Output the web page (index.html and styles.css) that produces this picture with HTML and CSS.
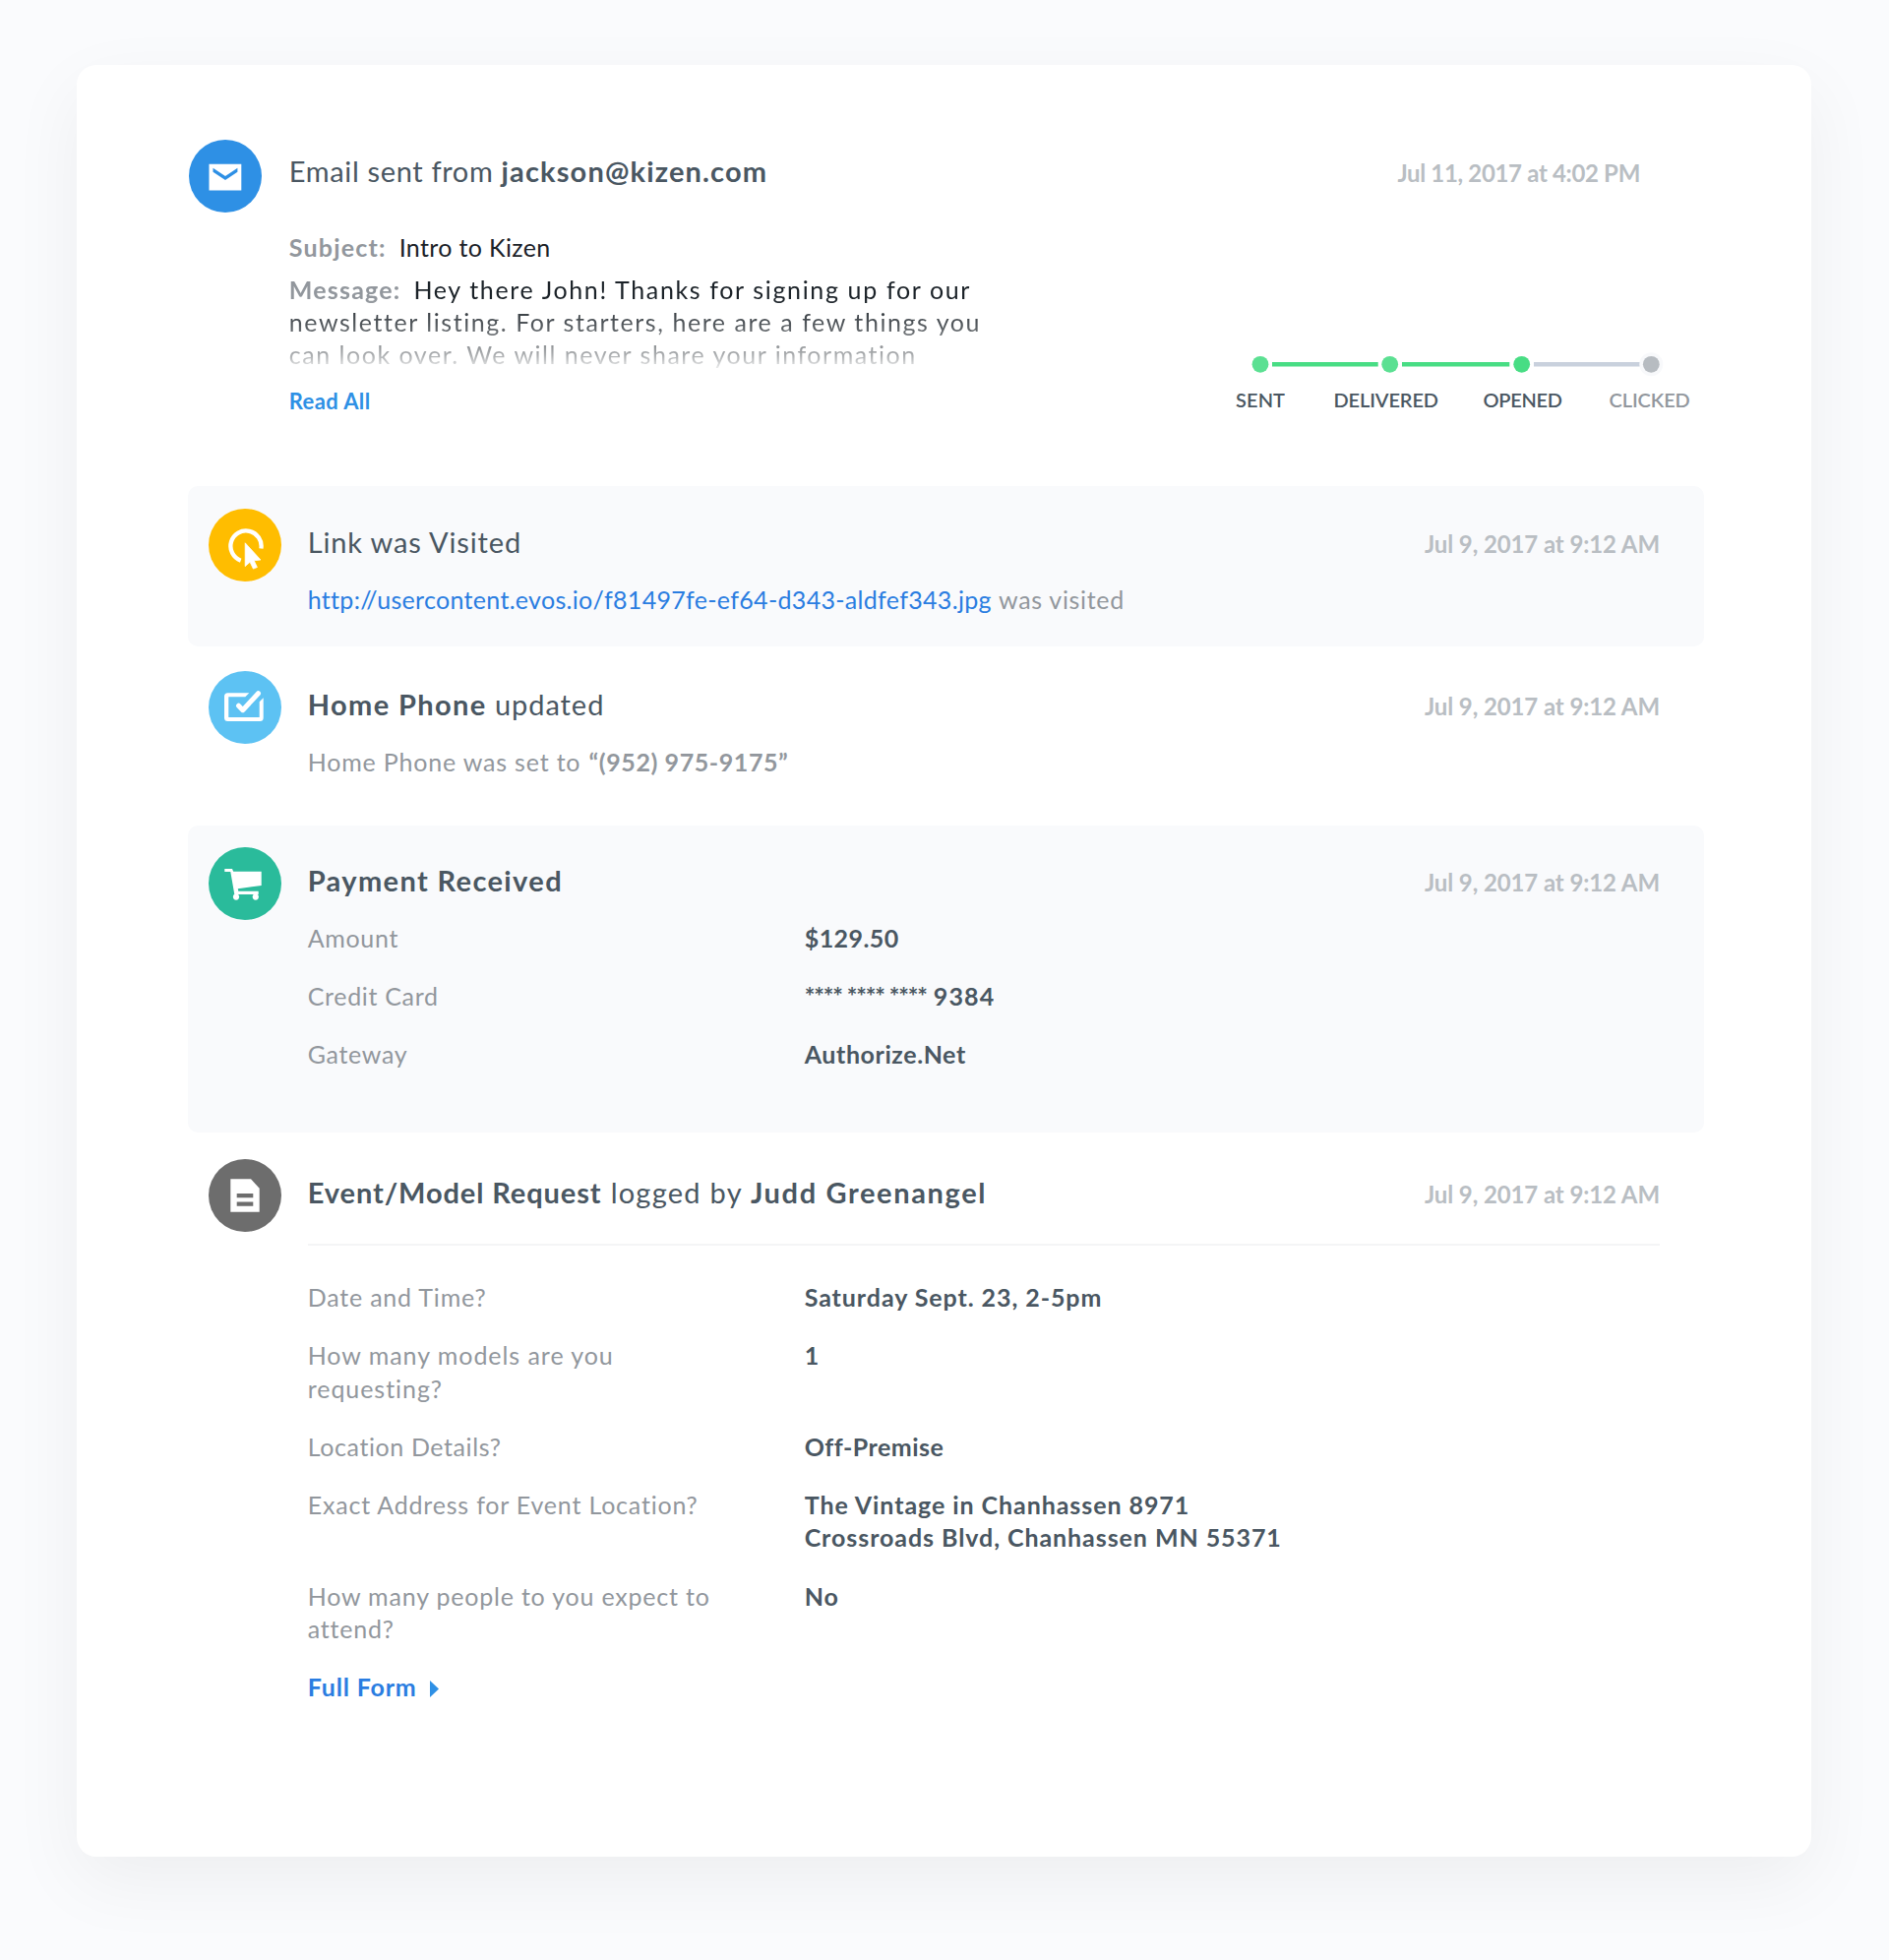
FILE: index.html
```html
<!DOCTYPE html>
<html lang="en">
<head>
<meta charset="utf-8">
<title>Activity timeline</title>
<link rel="stylesheet" href="styles.css">
</head>
<body>
<main class="card">

  <article class="item item-email">
    <svg class="icon" viewBox="0 0 74 74"><circle cx="37" cy="37" r="37" fill="#2e90e5"/><path fill="#fff" d="M20.5 24.7h32.8v26.8H20.5z"/><path fill="#2e90e5" d="M24.5 28.8 37 37l12.4-8.2v3.9L37 41l-12.5-8.3z"/></svg>
    <div class="body">
      <header class="head">
        <h2 class="title"><span class="t-email">Email sent from</span> <b class="t-address">jackson@kizen.com</b></h2>
        <time class="date date-email">Jul 11, 2017 at 4:02 PM</time>
      </header>
      <div class="email-row">
        <div class="email-text">
          <p class="subject"><b class="tag">Subject:</b><span class="dark">Intro to Kizen</span></p>
          <p class="message"><b class="tag">Message:</b><span class="m-first">Hey there John! Thanks for signing up for our</span><br>newsletter listing. For starters, here are a few things you<br><span class="m-last">can look over. We will never share your information</span></p>
          <a class="read-all">Read All</a>
        </div>
        <div class="progress">
          <svg class="track" viewBox="0 0 462 26">
            <path d="M37 13.3h107.7M169 13.3h109.3" stroke="#48dd84" stroke-width="4.4"/>
            <path d="M303 13.3h108" stroke="#c9d1dd" stroke-width="4.4"/>
            <circle cx="25" cy="13.3" r="8.4" fill="#5be092"/>
            <circle cx="156.7" cy="13.3" r="8.4" fill="#5be092"/>
            <circle cx="290.7" cy="13.3" r="8.4" fill="#48dd84"/>
            <circle cx="422.3" cy="13.3" r="12" fill="#f8f9fb"/>
            <circle cx="422.3" cy="13.3" r="8.4" fill="#b7bcc1"/>
          </svg>
          <div class="steps">
            <span class="s-sent">SENT</span><span class="s-delivered">DELIVERED</span><span class="s-opened">OPENED</span><span class="s-clicked">CLICKED</span>
          </div>
        </div>
      </div>
    </div>
  </article>

  <article class="item item-link shaded">
    <svg class="icon" viewBox="0 0 74 74"><circle cx="37" cy="37" r="37" fill="#ffbd00"/><path fill="none" stroke="#fff" stroke-width="4.3" d="M32.7 52.7A15.6 15.6 0 1 1 53.4 40.5"/><path fill="#fff" stroke="#fff" stroke-width=".8" stroke-linejoin="round" d="M37.2 34.8v23.8l4.9-4.4 3.3 6.9 4-1.6-3.2-6.7 6.7-.8z"/></svg>
    <div class="body">
      <header class="head">
        <h2 class="title t-link">Link was Visited</h2>
        <time class="date">Jul 9, 2017 at 9:12 AM</time>
      </header>
      <p class="detail"><a class="url">http://usercontent.evos.io/f81497fe-ef64-d343-aldfef343.jpg</a> <span class="visited">was visited</span></p>
    </div>
  </article>

  <article class="item item-phone">
    <svg class="icon" viewBox="0 0 74 74"><circle cx="37" cy="37" r="37" fill="#5dc2f3"/><path fill="#fff" d="M41.3 22.3H19.5a3.5 3.5 0 0 0-3.5 3.5v21.7a3.5 3.5 0 0 0 3.5 3.5h32.7a3.5 3.5 0 0 0 3.5-3.5V27.3l-4 4V47H20.3V26.2h17z"/><path fill="none" stroke="#fff" stroke-width="5" stroke-linecap="round" stroke-linejoin="round" d="m30.5 35.2 4.3 4.5 15.7-17"/></svg>
    <div class="body">
      <header class="head">
        <h2 class="title t-phone"><b>Home Phone</b> updated</h2>
        <time class="date">Jul 9, 2017 at 9:12 AM</time>
      </header>
      <p class="detail">Home Phone was set to <b class="number">“(952) 975-9175”</b></p>
    </div>
  </article>

  <article class="item item-payment shaded">
    <svg class="icon" viewBox="0 0 74 74"><circle cx="37" cy="37" r="37" fill="#2abb9b"/><path fill="#fff" d="M16.3 22H24l1.2 2.8h28.5V39L29.8 42.3l.5 2.4h20.4v3.2H26.3l-4-23h-6z"/><circle cx="28" cy="50.6" r="3.1" fill="#fff"/><circle cx="47.8" cy="50.6" r="3.1" fill="#fff"/></svg>
    <div class="body">
      <header class="head">
        <h2 class="title"><b>Payment Received</b></h2>
        <time class="date">Jul 9, 2017 at 9:12 AM</time>
      </header>
      <dl class="fields payment-fields">
        <dt>Amount</dt><dd class="v-amount">$129.50</dd>
        <dt>Credit Card</dt><dd><span class="v-stars">**** **** ****</span> <span class="v-digits">9384</span></dd>
        <dt>Gateway</dt><dd class="v-gateway">Authorize.Net</dd>
      </dl>
    </div>
  </article>

  <article class="item item-event">
    <svg class="icon" viewBox="0 0 74 74"><circle cx="37" cy="37" r="37" fill="#6d6d6d"/><path fill="#fff" d="M22.3 20.3H43l8.7 9.4v24H22.3z"/><path fill="#6d6d6d" d="M28.7 35h16.6v4.3H28.7zM28.7 43.6h16.6v4.2H28.7z"/></svg>
    <div class="body">
      <header class="head">
        <h2 class="title"><b class="t-event">Event/Model Request</b> <span class="t-logged">logged by</span> <b class="t-person">Judd Greenangel</b></h2>
        <time class="date">Jul 9, 2017 at 9:12 AM</time>
      </header>
      <dl class="fields event-fields">
        <dt>Date and Time?</dt><dd>Saturday Sept. 23, 2-5pm</dd>
        <dt class="q-models">How many models are you requesting?</dt><dd>1</dd>
        <dt class="q-location">Location Details?</dt><dd class="v-location">Off-Premise</dd>
        <dt>Exact Address for Event Location?</dt><dd>The Vintage in Chanhassen 8971<br>Crossroads Blvd, Chanhassen MN 55371</dd>
        <dt>How many people to you expect to attend?</dt><dd>No</dd>
      </dl>
      <a class="full-form">Full Form<svg class="caret" viewBox="0 0 9 17"><path fill="#2e90e5" d="M0 0 9 8.5 0 17z"/></svg></a>
    </div>
  </article>

</main>
</body>
</html>
```

FILE: styles.css
```css
* { box-sizing: border-box; }

body {
  margin: 0;
  padding: 66px 79px 105px 78px;
  background: #fafbfd;
  color: #4a5762;
  font-family: Lato, "Liberation Sans", sans-serif;
  font-size: 25px;
  line-height: 34px;
}

h2, p, dl, dt, dd { margin: 0; }
b { font-weight: 700; }

.card {
  height: 1821px;
  padding: 76px 109px 0 113px;
  background: #fff;
  border-radius: 20px;
  box-shadow: 0 25px 75px rgba(0, 0, 0, .056);
}

/* timeline entries */
.item {
  display: flex;
  gap: 26.7px;
  padding: 23px 45px 0 21px;
  border-radius: 10px;
}
.shaded { background: #f9fafc; }
.icon { flex: none; width: 74px; height: 74px; }
.body { flex: 1; padding-top: 16px; }

.head { display: flex; justify-content: space-between; height: 35px; }
.title {
  font-size: 29px;
  line-height: 36px;
  font-weight: 400;
  letter-spacing: .65px;
  white-space: nowrap;
}
.title b { letter-spacing: 1.37px; }
.date {
  padding-top: 2px;
  font-size: 24px;
  line-height: 36px;
  font-weight: 700;
  letter-spacing: -.1px;
  color: #b9bec3;
}
.detail {
  margin-top: 24px;
  color: #92979d;
  letter-spacing: .81px;
}

/* sent email */
.item-email { height: 352px; padding: 0 0 0 .6px; gap: 28.2px; }
.item-email .body { padding-top: 14px; }
.item-email .head { padding-right: 65px; }
.item-email .date-email { letter-spacing: -.33px; }
.title .t-address { letter-spacing: 1.15px; }
.email-row {
  display: flex;
  justify-content: space-between;
  align-items: flex-end;
  padding-right: 14px;
}
.email-text { white-space: nowrap; }
.tag { margin-right: 13px; color: #92979d; letter-spacing: 1.2px; }
.subject { margin-top: 43px; letter-spacing: .35px; }
.dark { color: #1b2228; }
.message {
  margin-top: 10px;
  line-height: 33px;
  letter-spacing: 1.55px;
  color: #1b2228;
  -webkit-mask-image: linear-gradient(#000 25%, rgba(0, 0, 0, .75) 53%, rgba(0, 0, 0, .36) 84%, rgba(0, 0, 0, .1) 97%);
  mask-image: linear-gradient(#000 25%, rgba(0, 0, 0, .75) 53%, rgba(0, 0, 0, .36) 84%, rgba(0, 0, 0, .1) 97%);
}
.m-first { letter-spacing: 1.64px; }
.m-last { letter-spacing: 1.52px; }
.read-all {
  display: block;
  margin-top: 17px;
  font-size: 22px;
  line-height: 28px;
  font-weight: 700;
  letter-spacing: .4px;
  color: #2e90e5;
}

.progress { width: 462px; margin-bottom: 4px; }
.track { display: block; width: 462px; height: 26px; }
.steps {
  display: flex;
  margin-top: 11px;
  font-size: 20px;
  line-height: 24px;
  font-weight: 600;
  white-space: nowrap;
}
.s-sent { width: 99.5px; letter-spacing: .1px; }
.s-delivered { width: 152px; letter-spacing: -.12px; }
.s-opened { width: 128px; letter-spacing: -.3px; }
.s-clicked { letter-spacing: -.1px; color: #92979d; }

/* link visited */
.item-link { height: 163px; }
.t-link { letter-spacing: .86px; }
.url { color: #2a7de1; letter-spacing: .31px; }
.visited { letter-spacing: .68px; }

/* phone updated */
.item-phone { height: 180px; margin-top: 2px; }
.t-phone { letter-spacing: .95px; }
.number { margin-left: 1px; letter-spacing: .58px; }

/* label and value pairs */
.fields { display: grid; grid-template-columns: 505px 1fr; }
.fields dt { max-width: 430px; color: #92979d; letter-spacing: .8px; }
.fields dd { font-weight: 700; letter-spacing: .93px; }

/* payment */
.item-payment { height: 312px; padding-top: 22px; }
.payment-fields { margin-top: 24px; row-gap: 25px; }
.payment-fields dt { letter-spacing: .68px; }
.fields .v-amount { letter-spacing: .44px; }
.v-stars { letter-spacing: -1.12px; }
.v-digits { letter-spacing: 1.2px; }
.fields .v-gateway { letter-spacing: .58px; }

/* event request */
.item-event { padding-top: 27px; }
.title .t-event { margin-right: 1px; letter-spacing: .9px; }
.title .t-logged { letter-spacing: 1.26px; }
.title .t-person { letter-spacing: 1.63px; }
.event-fields {
  margin-top: 35px;
  padding-top: 36px;
  row-gap: 26px;
  border-top: 2px solid #f4f5f6;
  line-height: 33.3px;
}
.fields .q-models { letter-spacing: .95px; }
.fields .q-location { letter-spacing: .6px; }
.fields .v-location { letter-spacing: .48px; }
.full-form {
  display: flex;
  align-items: center;
  gap: 13px;
  margin-top: 25px;
  font-weight: 700;
  letter-spacing: .82px;
  color: #2a7de1;
}
.caret { width: 9px; height: 17px; margin-top: 5px; }
```
